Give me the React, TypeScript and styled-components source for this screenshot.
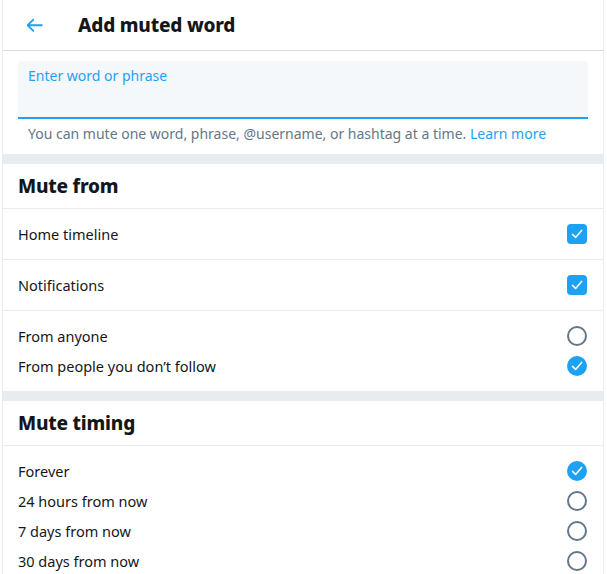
import React from "react";
import styled, { createGlobalStyle } from "styled-components";

const Global = createGlobalStyle`
  html, body { margin: 0; padding: 0; background: #ffffff; }
  body { font-family: "Noto Sans", "Open Sans", sans-serif; color: #14171a; }
  * { box-sizing: border-box; }
`;

const Page = styled.div`
  display: flex;
  align-items: flex-start;
  padding-left: 2px;
  width: 607px;
  height: 574px;
  overflow: hidden;
`;

const Column = styled.div`
  width: 602px;
  min-height: 574px;
  border-left: 1px solid #e6ecf0;
  border-right: 1px solid #e6ecf0;
`;

const Header = styled.header`
  height: 51px;
  display: flex;
  align-items: center;
  border-bottom: 1px solid #d6d9e2;
  padding-left: 16px;
`;

const BackButton = styled.button`
  width: 30px;
  height: 30px;
  padding: 0;
  border: none;
  background: transparent;
  display: flex;
  align-items: center;
  justify-content: center;
  color: #1da1f2;
  margin-right: 29px;
  svg { width: 22.5px; height: 22.5px; fill: currentColor; }
`;

const Title = styled.h2`
  margin: 0;
  font-size: 19px;
  font-weight: 800;
  line-height: 24px;
  letter-spacing: -0.2px;
`;

const InputArea = styled.div`
  padding: 10px 15px 0;
`;

const InputBox = styled.div`
  height: 58px;
  background: #f5f8fa;
  border-radius: 4px 4px 0 0;
  border-bottom: 2px solid #1da1f2;
  padding: 6px 10px;
  font-size: 14px;
  line-height: 18px;
  color: #1da1f2;
`;

const Help = styled.p`
  margin: 0;
  padding: 5px 25px 0;
  height: 35px;
  font-size: 14px;
  line-height: 20px;
  color: #657786;
  white-space: nowrap;
`;

const LearnMore = styled.span`
  color: #1da1f2;
`;

const Divider = styled.div`
  height: 10px;
  background: #e6ecf0;
`;

const SectionTitle = styled.h3`
  margin: 0;
  height: 45px;
  padding: 0 15px;
  display: flex;
  align-items: center;
  font-size: 19px;
  font-weight: 800;
  border-bottom: 1px solid #e6ecf0;
  letter-spacing: -0.2px;
`;

const Row = styled.div<{ $h: number; $border?: boolean }>`
  height: ${(p) => p.$h}px;
  display: flex;
  align-items: center;
  justify-content: space-between;
  padding: 0 16px 0 15px;
  font-size: 14.5px;
  border-bottom: ${(p) => (p.$border ? "1px solid #e6ecf0" : "none")};
`;

const Group = styled.div<{ $border?: boolean }>`
  padding: 10px 0;
  border-bottom: ${(p) => (p.$border ? "1px solid #e6ecf0" : "none")};
`;

const Box = styled.span`
  width: 20px;
  height: 20px;
  border-radius: 4px;
  background: #1da1f2;
  display: flex;
  align-items: center;
  justify-content: center;
`;

const Radio = styled.span<{ $on?: boolean }>`
  width: 20px;
  height: 20px;
  border-radius: 50%;
  background: ${(p) => (p.$on ? "#1da1f2" : "#fff")};
  border: ${(p) => (p.$on ? "none" : "2px solid #657786")};
  display: flex;
  align-items: center;
  justify-content: center;
`;

const Check = () => (
  <svg width="14" height="14" viewBox="0 0 14 14">
    <path d="M2.5 7.4 L5.6 10.4 L11.6 3.4" fill="none" stroke="#fff" strokeWidth="1.5" strokeLinecap="round" strokeLinejoin="round" />
  </svg>
);

const Arrow = () => (
  <svg viewBox="0 0 24 24">
    <path d="M20 11H7.414l4.293-4.293c.39-.39.39-1.023 0-1.414s-1.023-.39-1.414 0l-6 6c-.39.39-.39 1.023 0 1.414l6 6c.195.195.45.293.707.293s.512-.098.707-.293c.39-.39.39-1.023 0-1.414L7.414 13H20c.553 0 1-.447 1-1s-.447-1-1-1z" />
  </svg>
);

export default function App() {
  return (
    <>
      <Global />
      <Page>
        <Column>
          <Header>
            <BackButton aria-label="Back">
              <Arrow />
            </BackButton>
            <Title>Add muted word</Title>
          </Header>
          <InputArea>
            <InputBox>Enter word or phrase</InputBox>
          </InputArea>
          <Help>
            You can mute one word, phrase, @username, or hashtag at a time. <LearnMore>Learn more</LearnMore>
          </Help>
          <Divider />
          <SectionTitle>Mute from</SectionTitle>
          <Row $h={51} $border>
            Home timeline
            <Box><Check /></Box>
          </Row>
          <Row $h={51} $border>
            Notifications
            <Box><Check /></Box>
          </Row>
          <Group>
            <Row $h={30}>
              From anyone
              <Radio />
            </Row>
            <Row $h={30}>
              From people you don’t follow
              <Radio $on><Check /></Radio>
            </Row>
          </Group>
          <Divider />
          <SectionTitle>Mute timing</SectionTitle>
          <Group>
            <Row $h={30}>
              Forever
              <Radio $on><Check /></Radio>
            </Row>
            <Row $h={30}>
              24 hours from now
              <Radio />
            </Row>
            <Row $h={30}>
              7 days from now
              <Radio />
            </Row>
            <Row $h={30}>
              30 days from now
              <Radio />
            </Row>
          </Group>
        </Column>
      </Page>
    </>
  );
}
